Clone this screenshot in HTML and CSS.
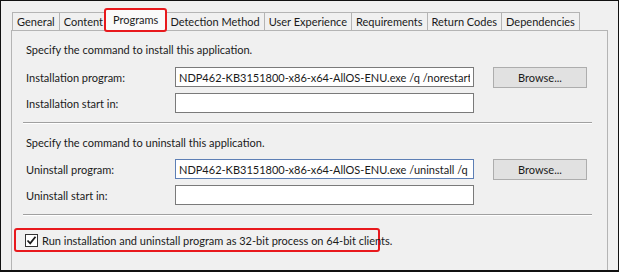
FILE: index.html
```html
<!DOCTYPE html>
<html lang="en">
<head>
    <meta charset="UTF-8">
    <title>Programs</title>
    <link rel="stylesheet" href="styles.css">
</head>
<body>
    <div class="frame">
        <div class="tabs">
            <div class="tab">General</div>
            <div class="tab">Content</div>
            <div class="tab active">Programs</div>
            <div class="tab">Detection Method</div>
            <div class="tab">User Experience</div>
            <div class="tab">Requirements</div>
            <div class="tab">Return Codes</div>
            <div class="tab">Dependencies</div>
        </div>
        <div class="page">
            <div class="heading">Specify the command to install this application.</div>
            <div class="row">
                <label for="instProg">Installation program:</label>
                <input id="instProg" type="text" value="NDP462-KB3151800-x86-x64-AllOS-ENU.exe /q /norestart /msioptions">
                <button>Browse...</button>
            </div>
            <div class="row">
                <label for="instDir">Installation start in:</label>
                <input id="instDir" type="text" value="">
            </div>
            <hr class="sep">
            <div class="heading">Specify the command to uninstall this application.</div>
            <div class="row">
                <label for="uninstProg">Uninstall program:</label>
                <input id="uninstProg" class="focused" type="text" value="NDP462-KB3151800-x86-x64-AllOS-ENU.exe /uninstall /q">
                <button>Browse...</button>
            </div>
            <div class="row">
                <label for="uninstDir">Uninstall start in:</label>
                <input id="uninstDir" type="text" value="">
            </div>
            <hr class="sep">
            <div class="check-row">
                <span class="checkbox">
                    <svg width="11" height="11" viewBox="0 0 11 11"><path d="M1.5 5.5 L4.2 8.3 L9.5 1.8" fill="none" stroke="#1a1a1a" stroke-width="1.8"/></svg>
                </span>
                <span>Run installation and uninstall program as 32-bit process on 64-bit clients.</span>
            </div>
        </div>
    </div>
</body>
</html>
```

FILE: styles.css
```css
* {
    box-sizing: border-box;
}

body {
    margin: 0;
    font-family: Lato, 'Noto Sans', sans-serif;
    font-size: 11px;
    color: #1a1a1a;
    background: #f0f0f0;
}

.frame {
    width: 619px;
    height: 272px;
    border: 1px solid #111;
    border-bottom-width: 2px;
    overflow: hidden;
    background: #f0f0f0;
    display: flex;
    flex-direction: column;
}

.tabs {
    display: flex;
    margin: 11px 0 0 11px;
    height: 18px;
}

.tab {
    height: 18px;
    line-height: 17px;
    padding: 0 4px;
    border: 1px solid #b4b4b4;
    border-bottom: none;
    margin-right: -1px;
    background: #f0f0f0;
    white-space: nowrap;
}

.tab.active {
    position: relative;
    z-index: 1;
    height: 24px;
    margin: -4px -2px -2px -3px;
    padding: 2px 7px 0;
    line-height: 16px;
    border: 2px solid #e8191d;
    border-radius: 3px;
    background: #fafafa;
}

.page {
    flex: 1;
    margin-left: 10px;
    width: 597px;
    border: 1px solid #b4b4b4;
    border-bottom: none;
    padding: 11px 15px 0 14px;
    background: #f0f0f0;
}

.heading {
    line-height: 16px;
    margin-bottom: 9px;
}

.row {
    display: flex;
    align-items: center;
    height: 20px;
    margin-bottom: 6px;
}

.row label {
    width: 149px;
}

.row input {
    width: 299px;
    height: 20px;
    border: 1px solid #7a7a7a;
    background: #fff;
    padding: 0 3px;
    font: inherit;
    color: #1a1a1a;
    outline: none;
}

.row input.focused {
    border-color: #5d7fb5;
}

.row button {
    margin-left: 19px;
    width: 94px;
    height: 21px;
    border: 1px solid #adadad;
    background: #e1e1e1;
    font: inherit;
    color: #1a1a1a;
    padding: 0;
}

.sep {
    margin: 9px 0 11px -3px;
    border: none;
    border-top: 1px solid #a0a0a0;
    border-bottom: 1px solid #fff;
    height: 0;
}

.sep + .heading {
    margin-bottom: 8px;
}

.check-row {
    display: inline-flex;
    align-items: center;
    gap: 4px;
    margin: 1px 0 0 -12px;
    width: 366px;
    height: 24px;
    padding-left: 9px;
    border: 2px solid #e8191d;
    border-radius: 3px;
    white-space: nowrap;
}

.checkbox {
    width: 13px;
    height: 13px;
    border: 1px solid #333;
    background: #fff;
    display: flex;
    align-items: center;
    justify-content: center;
}
```
